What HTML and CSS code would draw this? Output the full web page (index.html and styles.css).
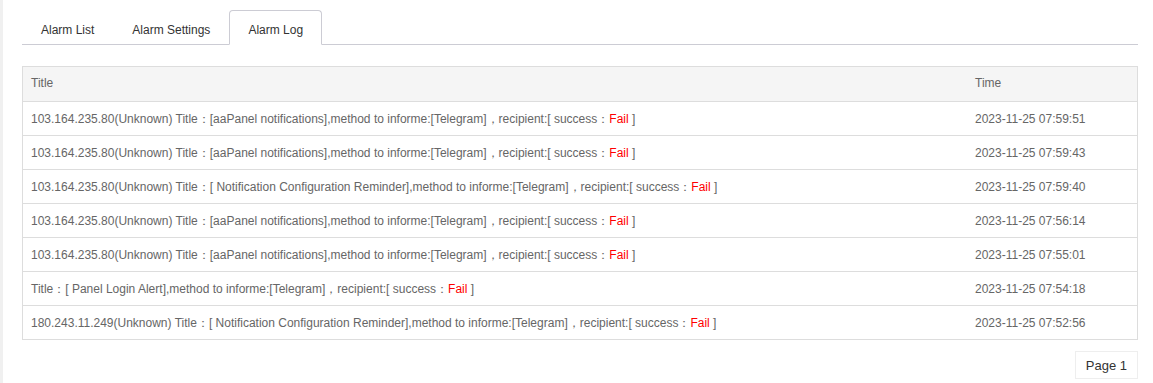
FILE: index.html
```html
<!DOCTYPE html>
<html lang="en">
<head>
    <meta charset="UTF-8">
    <meta name="viewport" content="width=device-width, initial-scale=1.0">
    <title>Alarm Log</title>
    <link rel="stylesheet" href="styles.css">
</head>
<body>
    <div class="page">
        <ul class="tabs">
            <li><a href="#">Alarm List</a></li>
            <li><a href="#">Alarm Settings</a></li>
            <li class="active"><a href="#">Alarm Log</a></li>
        </ul>

        <table class="log">
            <thead>
                <tr>
                    <th>Title</th>
                    <th class="time">Time</th>
                </tr>
            </thead>
            <tbody>
                <tr>
                    <td>103.164.235.80(Unknown) Title：[aaPanel notifications],method to informe:[Telegram]，recipient:[ success：<span class="fail">Fail</span> ]</td>
                    <td>2023-11-25 07:59:51</td>
                </tr>
                <tr>
                    <td>103.164.235.80(Unknown) Title：[aaPanel notifications],method to informe:[Telegram]，recipient:[ success：<span class="fail">Fail</span> ]</td>
                    <td>2023-11-25 07:59:43</td>
                </tr>
                <tr>
                    <td>103.164.235.80(Unknown) Title：[ Notification Configuration Reminder],method to informe:[Telegram]，recipient:[ success：<span class="fail">Fail</span> ]</td>
                    <td>2023-11-25 07:59:40</td>
                </tr>
                <tr>
                    <td>103.164.235.80(Unknown) Title：[aaPanel notifications],method to informe:[Telegram]，recipient:[ success：<span class="fail">Fail</span> ]</td>
                    <td>2023-11-25 07:56:14</td>
                </tr>
                <tr>
                    <td>103.164.235.80(Unknown) Title：[aaPanel notifications],method to informe:[Telegram]，recipient:[ success：<span class="fail">Fail</span> ]</td>
                    <td>2023-11-25 07:55:01</td>
                </tr>
                <tr>
                    <td>Title：[ Panel Login Alert],method to informe:[Telegram]，recipient:[ success：<span class="fail">Fail</span> ]</td>
                    <td>2023-11-25 07:54:18</td>
                </tr>
                <tr>
                    <td>180.243.11.249(Unknown) Title：[ Notification Configuration Reminder],method to informe:[Telegram]，recipient:[ success：<span class="fail">Fail</span> ]</td>
                    <td>2023-11-25 07:52:56</td>
                </tr>
            </tbody>
        </table>

        <div class="pager">
            <span class="page-num">Page 1</span>
        </div>
    </div>
</body>
</html>
```

FILE: styles.css
```css
body {
    margin: 0;
    padding: 0;
    background-color: #f0f0f0;
    font-family: "Liberation Sans", Arial, sans-serif;
    font-size: 12px;
    color: #666;
}

.page {
    margin-left: 3px;
    background-color: #ffffff;
    padding: 10px 15px 5px 19px;
    min-height: 368px;
}

/* tabs */
.tabs {
    list-style: none;
    margin: 0;
    padding: 0;
    display: flex;
    border-bottom: 1px solid #ccccd4;
}

.tabs li {
    margin-bottom: -1px;
}

.tabs a {
    display: block;
    padding: 0 18px;
    height: 33px;
    line-height: 38px;
    color: #333;
    text-decoration: none;
    border: 1px solid transparent;
    border-radius: 4px 4px 0 0;
}

.tabs .active a {
    border-color: #ccccd4;
    border-bottom-color: #ffffff;
    background-color: #ffffff;
}

/* table */
.log {
    width: 100%;
    margin-top: 21px;
    border-collapse: collapse;
    border: 1px solid #ddd;
}

.log th,
.log td {
    text-align: left;
    font-weight: normal;
    padding: 0 8px;
    border-top: 1px solid #ddd;
    line-height: 18px;
}

.log th {
    background-color: #f5f5f5;
    height: 32px;
    padding-bottom: 2px;
    color: #666;
}

.log td {
    height: 33px;
}

.log .time {
    width: 154px;
}

.fail {
    color: #ff0000;
}

/* pager */
.pager {
    display: flex;
    justify-content: flex-end;
    margin-top: 11px;
}

.page-num {
    display: block;
    padding: 0 10px;
    height: 26px;
    line-height: 28px;
    border: 1px solid #eee;
    color: #333;
    font-size: 13px;
}
```
